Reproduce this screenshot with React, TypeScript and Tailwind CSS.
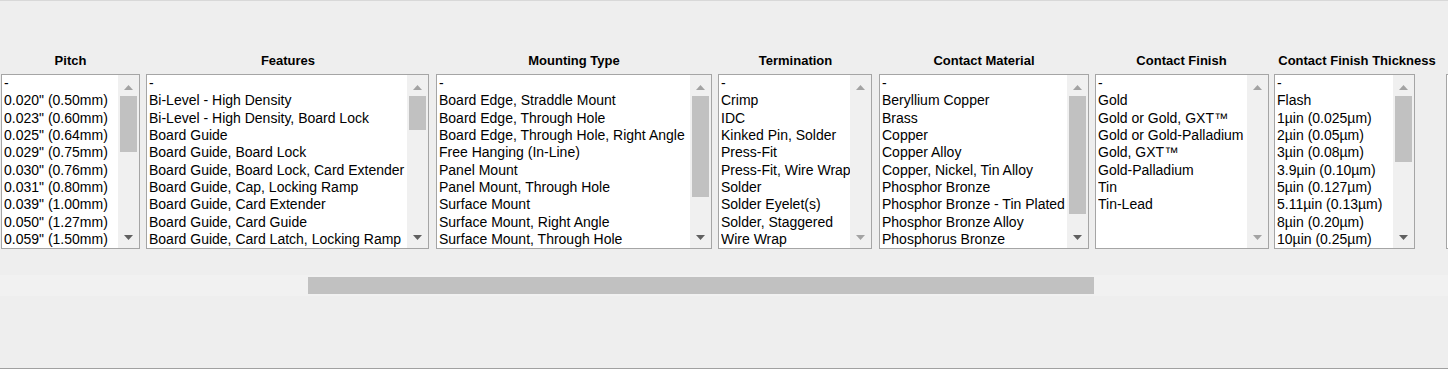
import React from "react";

type Col = {
  title: string;
  colW: string;
  boxW: string;
  items: string[];
  thumb: string | null;
};

const cols: Col[] = [
  {
    title: "Pitch",
    colW: "w-[139px]",
    boxW: "w-[139px]",
    thumb: "h-[56px]",
    items: [
      "-",
      '0.020" (0.50mm)',
      '0.023" (0.60mm)',
      '0.025" (0.64mm)',
      '0.029" (0.75mm)',
      '0.030" (0.76mm)',
      '0.031" (0.80mm)',
      '0.039" (1.00mm)',
      '0.050" (1.27mm)',
      '0.059" (1.50mm)',
    ],
  },
  {
    title: "Features",
    colW: "w-[284px]",
    boxW: "w-[283px]",
    thumb: "h-[34px]",
    items: [
      "-",
      "Bi-Level - High Density",
      "Bi-Level - High Density, Board Lock",
      "Board Guide",
      "Board Guide, Board Lock",
      "Board Guide, Board Lock, Card Extender",
      "Board Guide, Cap, Locking Ramp",
      "Board Guide, Card Extender",
      "Board Guide, Card Guide",
      "Board Guide, Card Latch, Locking Ramp",
    ],
  },
  {
    title: "Mounting Type",
    colW: "w-[276px]",
    boxW: "w-[276px]",
    thumb: "h-[101px]",
    items: [
      "-",
      "Board Edge, Straddle Mount",
      "Board Edge, Through Hole",
      "Board Edge, Through Hole, Right Angle",
      "Free Hanging (In-Line)",
      "Panel Mount",
      "Panel Mount, Through Hole",
      "Surface Mount",
      "Surface Mount, Right Angle",
      "Surface Mount, Through Hole",
    ],
  },
  {
    title: "Termination",
    colW: "w-[155px]",
    boxW: "w-[154px]",
    thumb: null,
    items: [
      "-",
      "Crimp",
      "IDC",
      "Kinked Pin, Solder",
      "Press-Fit",
      "Press-Fit, Wire Wrap",
      "Solder",
      "Solder Eyelet(s)",
      "Solder, Staggered",
      "Wire Wrap",
    ],
  },
  {
    title: "Contact Material",
    colW: "w-[210px]",
    boxW: "w-[210px]",
    thumb: "h-[118px]",
    items: [
      "-",
      "Beryllium Copper",
      "Brass",
      "Copper",
      "Copper Alloy",
      "Copper, Nickel, Tin Alloy",
      "Phosphor Bronze",
      "Phosphor Bronze - Tin Plated",
      "Phosphor Bronze Alloy",
      "Phosphorus Bronze",
    ],
  },
  {
    title: "Contact Finish",
    colW: "w-[173px]",
    boxW: "w-[174px]",
    thumb: null,
    items: [
      "-",
      "Gold",
      "Gold or Gold, GXT™",
      "Gold or Gold-Palladium",
      "Gold, GXT™",
      "Gold-Palladium",
      "Tin",
      "Tin-Lead",
    ],
  },
  {
    title: "Contact Finish Thickness",
    colW: "w-[166px]",
    boxW: "w-[141px]",
    thumb: "h-[66px]",
    items: [
      "-",
      "Flash",
      "1µin (0.025µm)",
      "2µin (0.05µm)",
      "3µin (0.08µm)",
      "3.9µin (0.10µm)",
      "5µin (0.127µm)",
      "5.11µin (0.13µm)",
      "8µin (0.20µm)",
      "10µin (0.25µm)",
    ],
  },
];

function Arrow({ up, dark }: { up: boolean; dark: boolean }) {
  const fill = dark ? "#606060" : "#a3a3a3";
  return (
    <svg width="9" height="5" viewBox="0 0 9 5">
      {up ? (
        <polygon points="0,5 4.5,0 9,5" fill={fill} />
      ) : (
        <polygon points="0,0 9,0 4.5,5" fill={fill} />
      )}
    </svg>
  );
}

function ListBox({ col }: { col: Col }) {
  const scrollable = col.thumb !== null;
  return (
    <div
      className={`${col.boxW} h-[175px] border border-[#a5a5a5] bg-white flex overflow-hidden`}
    >
      <div className="flex-1 min-w-0 overflow-hidden pl-[2px]">
        {col.items.map((it, i) => (
          <div
            key={i}
            className="text-[14px] leading-[17.33px] whitespace-nowrap overflow-hidden"
          >
            {it}
          </div>
        ))}
      </div>
      <div className="w-[21px] shrink-0 bg-[#f0f0f0] flex flex-col">
        <div className="h-[21px] flex items-center justify-center pt-[3px]">
          <Arrow up dark={false} />
        </div>
        <div className="flex-1 px-[2px]">
          {scrollable && <div className={`${col.thumb} bg-[#c1c1c1]`} />}
        </div>
        <div className="h-[21px] flex items-center justify-center">
          <Arrow up={false} dark={scrollable} />
        </div>
      </div>
    </div>
  );
}

export default function App() {
  return (
    <div className="w-[1448px] h-[369px] bg-[#eeeeee] border-t border-t-[#d8d8d8] border-b border-b-[#a0a0a0] overflow-hidden flex flex-col font-['Liberation_Sans',Arial,sans-serif] text-black">
      <div className="flex gap-[6px] pl-[1px] pt-[52px] overflow-hidden">
        {cols.map((c) => (
          <div key={c.title} className={`${c.colW} shrink-0 flex flex-col`}>
            <div className="h-[15px] mb-[6px] text-[13px] leading-[15px] font-bold text-center whitespace-nowrap">
              {c.title}
            </div>
            <ListBox col={c} />
          </div>
        ))}
        <div className="w-[160px] shrink-0 flex flex-col">
          <div className="h-[15px] mb-[6px]" />
          <div className="w-[160px] h-[175px] border border-[#a5a5a5] bg-white" />
        </div>
      </div>
      <div className="mt-[26px] h-[21px] bg-[#f1f1f1] shrink-0">
        <div className="ml-[308px] mt-[2px] w-[786px] h-[17px] bg-[#c1c1c1]" />
      </div>
    </div>
  );
}
